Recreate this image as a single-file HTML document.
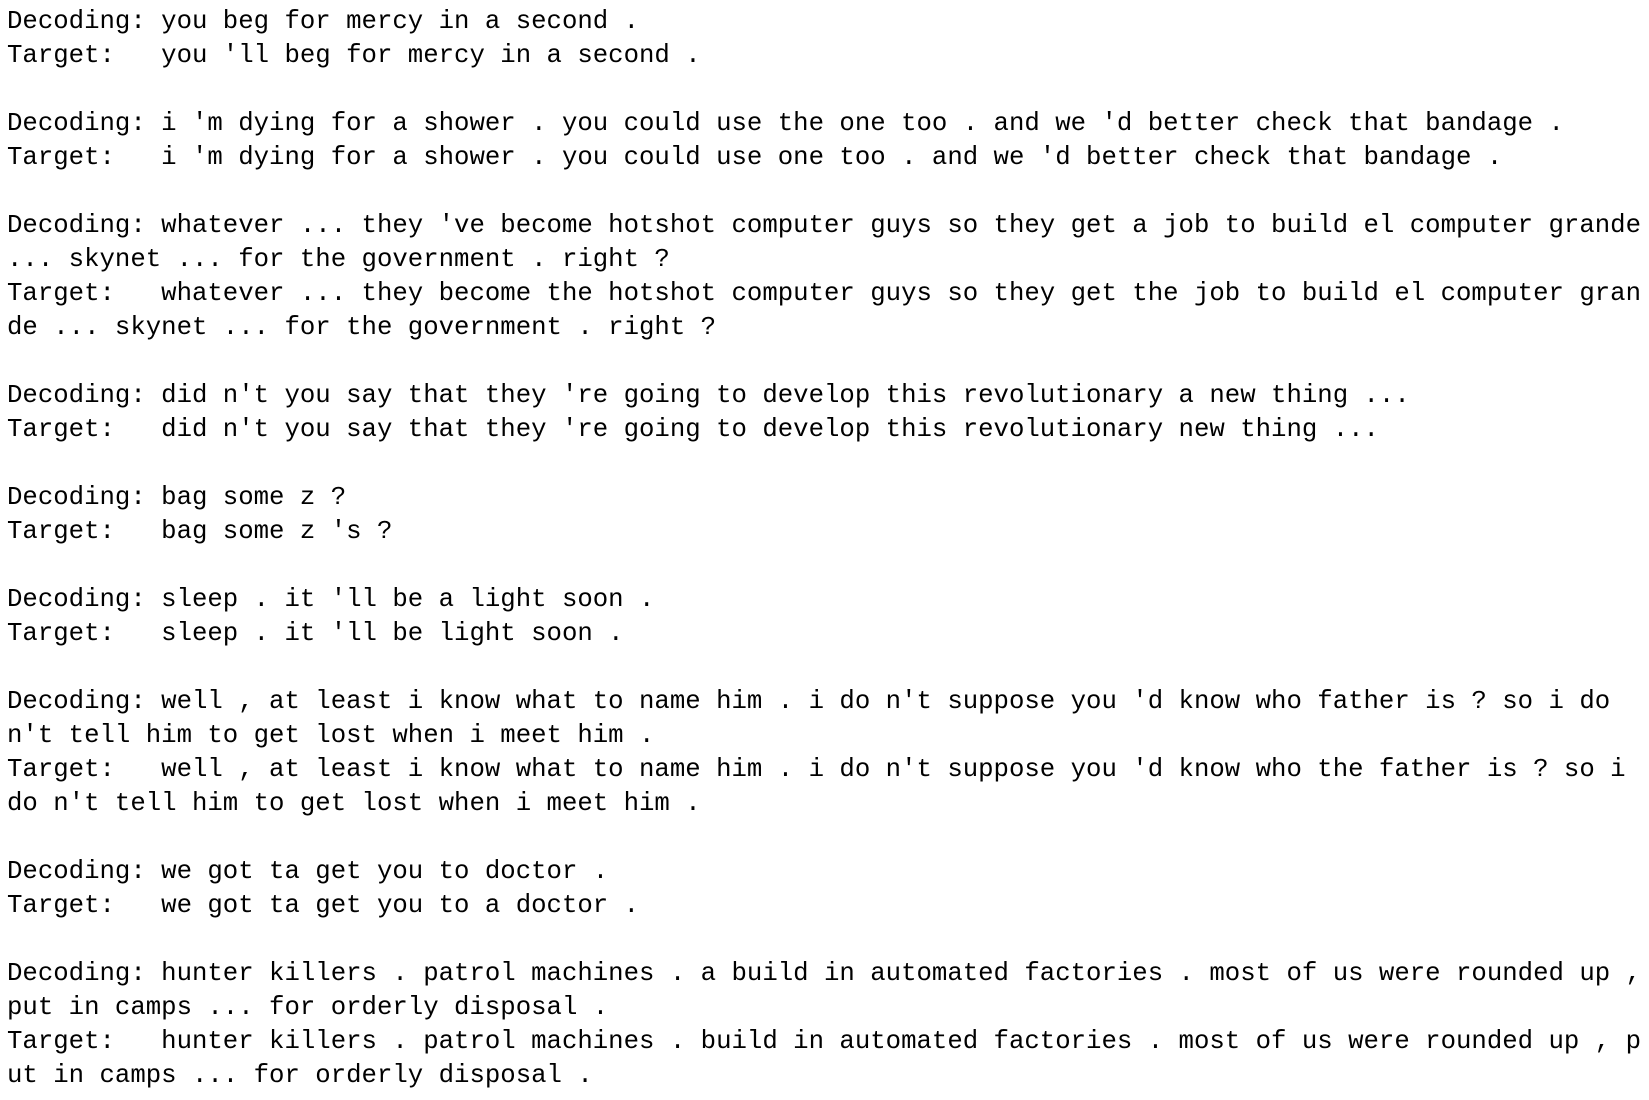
<!DOCTYPE html>
<html>
<head>
<meta charset="utf-8">
<style>
html,body{margin:0;padding:0;background:#fff;width:1649px;height:1100px;overflow:hidden;}
pre{margin:0;position:absolute;left:7px;top:5px;font-family:"Liberation Mono",monospace;font-size:25.7px;line-height:34.0px;color:#000;white-space:pre;}
</style>
</head>
<body>
<pre>Decoding: you beg for mercy in a second .
Target:   you 'll beg for mercy in a second .

Decoding: i 'm dying for a shower . you could use the one too . and we 'd better check that bandage .
Target:   i 'm dying for a shower . you could use one too . and we 'd better check that bandage .

Decoding: whatever ... they 've become hotshot computer guys so they get a job to build el computer grande
... skynet ... for the government . right ?
Target:   whatever ... they become the hotshot computer guys so they get the job to build el computer gran
de ... skynet ... for the government . right ?

Decoding: did n't you say that they 're going to develop this revolutionary a new thing ...
Target:   did n't you say that they 're going to develop this revolutionary new thing ...

Decoding: bag some z ?
Target:   bag some z 's ?

Decoding: sleep . it 'll be a light soon .
Target:   sleep . it 'll be light soon .

Decoding: well , at least i know what to name him . i do n't suppose you 'd know who father is ? so i do
n't tell him to get lost when i meet him .
Target:   well , at least i know what to name him . i do n't suppose you 'd know who the father is ? so i
do n't tell him to get lost when i meet him .

Decoding: we got ta get you to doctor .
Target:   we got ta get you to a doctor .

Decoding: hunter killers . patrol machines . a build in automated factories . most of us were rounded up ,
put in camps ... for orderly disposal .
Target:   hunter killers . patrol machines . build in automated factories . most of us were rounded up , p
ut in camps ... for orderly disposal .</pre>
</body>
</html>
